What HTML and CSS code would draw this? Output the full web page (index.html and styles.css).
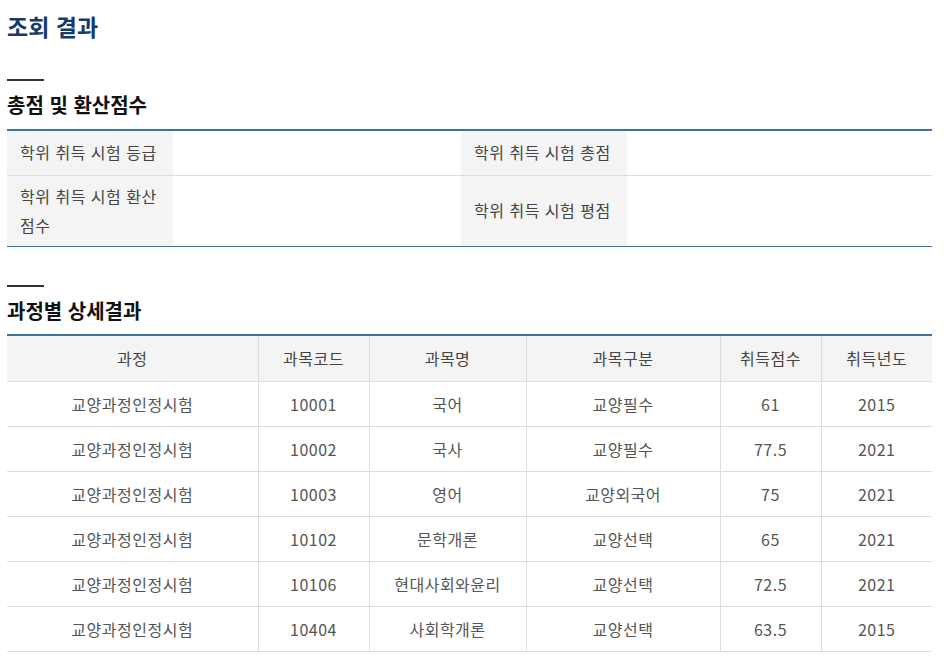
FILE: index.html
```html
<!DOCTYPE html>
<html lang="ko">
<head>
<meta charset="utf-8">
<title>조회 결과</title>
<link rel="stylesheet" href="styles.css">
</head>
<body>
<div class="page">
  <h1 class="page-title">조회 결과</h1>

  <section class="section">
    <div class="dash"></div>
    <h2 class="section-title">총점 및 환산점수</h2>
    <table class="info-table">
      <colgroup>
        <col class="c-th"><col class="c-td"><col class="c-th"><col class="c-td2">
      </colgroup>
      <tr class="r1">
        <th>학위 취득 시험 등급</th>
        <td></td>
        <th>학위 취득 시험 총점</th>
        <td></td>
      </tr>
      <tr class="r2">
        <th>학위 취득 시험 환산 점수</th>
        <td></td>
        <th>학위 취득 시험 평점</th>
        <td></td>
      </tr>
    </table>
  </section>

  <section class="section second">
    <div class="dash"></div>
    <h2 class="section-title">과정별 상세결과</h2>
    <table class="list-table">
      <colgroup>
        <col class="w1"><col class="w2"><col class="w3"><col class="w4"><col class="w5"><col class="w6">
      </colgroup>
      <thead>
        <tr><th>과정</th><th>과목코드</th><th>과목명</th><th>과목구분</th><th>취득점수</th><th>취득년도</th></tr>
      </thead>
      <tbody>
        <tr><td>교양과정인정시험</td><td>10001</td><td>국어</td><td>교양필수</td><td>61</td><td>2015</td></tr>
        <tr><td>교양과정인정시험</td><td>10002</td><td>국사</td><td>교양필수</td><td>77.5</td><td>2021</td></tr>
        <tr><td>교양과정인정시험</td><td>10003</td><td>영어</td><td>교양외국어</td><td>75</td><td>2021</td></tr>
        <tr><td>교양과정인정시험</td><td>10102</td><td>문학개론</td><td>교양선택</td><td>65</td><td>2021</td></tr>
        <tr><td>교양과정인정시험</td><td>10106</td><td>현대사회와윤리</td><td>교양선택</td><td>72.5</td><td>2021</td></tr>
        <tr><td>교양과정인정시험</td><td>10404</td><td>사회학개론</td><td>교양선택</td><td>63.5</td><td>2015</td></tr>
      </tbody>
    </table>
  </section>
</div>
</body>
</html>
```

FILE: styles.css
```css
* { box-sizing: border-box; }
html, body { margin: 0; padding: 0; background: #fff; }
body {
  font-family: "Noto Sans CJK KR", "Noto Sans", sans-serif;
  color: #555;
}
.page { padding: 0 12px 0 7px; }

.page-title {
  margin: 0;
  padding-top: 8px;
  font-size: 23px;
  line-height: 36px;
  font-weight: 700;
  color: #163a6c;
}

.section { margin-top: 35px; }
.section.second { margin-top: 38px; }
.section.second .section-title { margin-bottom: 8px; }

.dash {
  width: 37px;
  height: 2px;
  background: #333;
}

.section-title {
  margin: 9px 0 9px;
  font-size: 20px;
  line-height: 30px;
  font-weight: 700;
  color: #111;
}

table {
  width: 100%;
  border-collapse: collapse;
  table-layout: fixed;
  font-size: 16px;
  letter-spacing: 0.5px;
}

.info-table { border-top: 2px solid #40709c; border-bottom: 1px solid #40709c; }
.info-table .c-th { width: 166px; }
.info-table .c-td { width: 288px; }
.info-table th {
  background: #f4f4f4;
  text-align: left;
  font-weight: 400;
  color: #444;
  padding: 0 2px 0 13px;
  line-height: 29px;
  word-break: keep-all;
}
.info-table td { background: #fff; }
.info-table .r1 th, .info-table .r1 td { height: 45px; border-bottom: 1px solid #ddd; }
.info-table .r2 th, .info-table .r2 td { height: 71px; padding-top: 5px; padding-bottom: 5px; }
.info-table .r2 td { padding: 0; }

.list-table { border-top: 2px solid #40709c; }
.list-table .w1 { width: 251px; }
.list-table .w2 { width: 111px; }
.list-table .w3 { width: 157px; }
.list-table .w4 { width: 194px; }
.list-table .w5 { width: 101px; }
.list-table .w6 { width: 111px; }
.list-table th, .list-table td {
  text-align: center;
  border-bottom: 1px solid #ddd;
  border-left: 1px solid #ddd;
  padding: 0;
}
.list-table th:first-child, .list-table td:first-child { border-left: none; }
.list-table th {
  background: #f4f4f4;
  font-weight: 400;
  color: #444;
  height: 47px;
}
.list-table td { height: 45px; color: #555; }
```
